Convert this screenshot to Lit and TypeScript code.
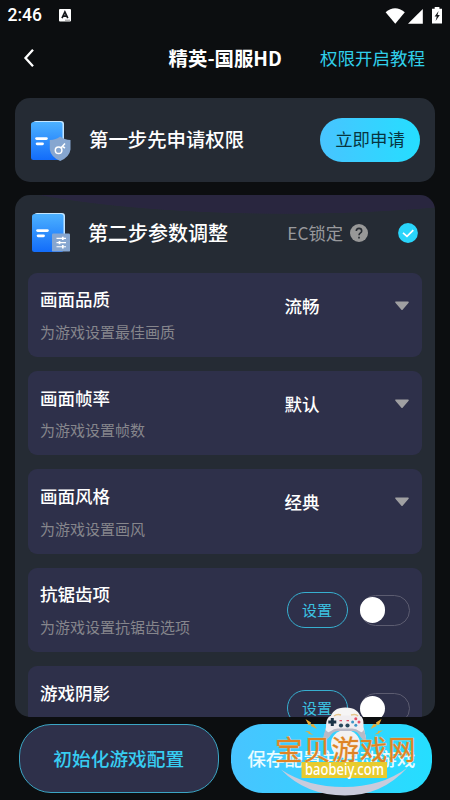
import { LitElement, html, css, svg } from "lit";
import { customElement, property } from "lit/decorators.js";

const FONT = css`"Noto Sans CJK SC", "Noto Sans", sans-serif`;

@customElement("setting-row")
class SettingRow extends LitElement {
  @property() name = "";
  @property() hint = "";
  @property() value = "";

  static styles = css`
    :host {
      display: flex;
      flex: none;
      box-sizing: border-box;
      height: 84.3px;
      border-radius: 9px;
      background: #2e304a;
      font-family: ${FONT};
    }
    .text {
      flex: none;
      width: 259px;
      box-sizing: border-box;
      padding: 13.6px 0 0 12.5px;
    }
    .name {
      font-size: 17.5px;
      line-height: 26px;
      font-weight: 500;
      color: #fff;
    }
    .hint {
      margin-top: 8.5px;
      font-size: 15px;
      line-height: 22px;
      color: #86868c;
      white-space: nowrap;
    }
    .pick {
      flex: 1;
      display: flex;
      justify-content: space-between;
      height: 26px;
      margin-top: 20px;
      padding-right: 12.5px;
      align-items: center;
      font-size: 17.5px;
      line-height: 26px;
      font-weight: 500;
      color: #fff;
    }
    .pick span {
      margin-left: -2px;
    }
    .ctl {
      flex: 1;
      display: flex;
      justify-content: space-between;
      align-items: center;
      padding-right: 12.5px;
    }
    .set {
      box-sizing: border-box;
      width: 61px;
      height: 36px;
      border: 1.5px solid #37afd0;
      border-radius: 18px;
      font-size: 15px;
      line-height: 34px;
      text-align: center;
      color: #3cc3e2;
    }
    .toggle {
      box-sizing: border-box;
      display: flex;
      align-items: center;
      width: 50px;
      height: 31px;
      border: 1.2px solid #5c5c70;
      border-radius: 16px;
    }
    .knob {
      width: 25.5px;
      height: 25.5px;
      margin-left: -1.2px;
      border-radius: 50%;
      background: #fff;
    }
  `;

  render() {
    return html`
      <div class="text">
        <div class="name">${this.name}</div>
        <div class="hint">${this.hint}</div>
      </div>
      ${this.value
        ? html`<div class="pick">
            <span>${this.value}</span>
            <svg width="16" height="10" viewBox="0 0 16 10">
              <path d="M2 1.2H14L8 8.2Z" fill="#a0a0a2" stroke="#a0a0a2" stroke-width="1.6" stroke-linejoin="round" />
            </svg>
          </div>`
        : html`<div class="ctl">
            <div class="set">设置</div>
            <div class="toggle"><div class="knob"></div></div>
          </div>`}
    `;
  }
}

const docBase = (id: string) => svg`
  <defs>
    <linearGradient id=${id} x1="0" y1="0" x2="0" y2="1">
      <stop offset="0" stop-color="#4cb1ff" /><stop offset="1" stop-color="#126cfa" />
    </linearGradient>
  </defs>
  <rect x="2" y="0" width="31" height="37" rx="3" fill="#c3e5ff" />
  <rect x="0" y="1" width="31.5" height="38" rx="2.5" fill=${`url(#${id})`} />
  <rect x="4.2" y="16.2" width="12.6" height="2.8" rx="1.4" fill="#fff" />
  <rect x="4.7" y="21.4" width="8.2" height="2.8" rx="1.4" fill="#fff" />`;

@customElement("app-root")
class AppRoot extends LitElement {
  static styles = css`
    :host {
      position: relative;
      display: flex;
      flex-direction: column;
      box-sizing: border-box;
      width: 450px;
      height: 800px;
      overflow: hidden;
      background: #0c0e10;
      color: #fff;
      font-family: ${FONT};
      white-space: nowrap;
    }
    svg {
      display: block;
      flex: none;
    }
    .status {
      display: flex;
      align-items: center;
      height: 31px;
      padding: 0 7px 0 7.5px;
      font: 500 17.5px/31px Roboto, sans-serif;
    }
    .ime {
      margin-left: 17px;
    }
    .radio {
      margin-left: auto;
    }
    .nav {
      display: grid;
      grid-template-columns: 1fr auto 1fr;
      align-items: center;
      height: 54px;
      padding: 0 25px 0 25.5px;
      font-size: 17.5px;
      line-height: 26px;
    }
    .nav svg {
      margin-left: -3.5px;
    }
    .nav b {
      font-size: 19.4px;
      font-weight: 700;
    }
    .guide {
      justify-self: end;
      color: #30cfea;
    }
    .card {
      flex: none;
      box-sizing: border-box;
      margin: 0 15px;
      border-radius: 15px;
      background: #252b34;
    }
    .first {
      display: flex;
      align-items: center;
      height: 84.5px;
      margin-top: 12.5px;
      padding: 0 15px 0 16px;
    }
    .first svg {
      margin-top: 2px;
    }
    .first h2 {
      margin: -1px 0 0 18px;
      font-size: 19.4px;
      line-height: 28px;
      font-weight: 500;
    }
    .apply {
      width: 100px;
      height: 43.5px;
      margin-left: auto;
      border-radius: 22px;
      background: linear-gradient(90deg, #48c4ff, #25deff);
      color: #08353f;
      font-size: 17.4px;
      line-height: 42px;
      text-align: center;
    }
    .second {
      height: 522px;
      margin-top: 13px;
      overflow: hidden;
      background: radial-gradient(ellipse 340px 60px at 270px -41px, #29263f 99%, transparent 100%) #252b34;
    }
    .head {
      display: flex;
      align-items: center;
      height: 77.7px;
      box-sizing: border-box;
      padding: 0 17.5px 1.5px 17px;
    }
    .head h2 {
      margin: 0 0 0 17px;
      font-size: 20px;
      line-height: 30px;
      font-weight: 500;
    }
    .lock {
      margin-left: auto;
      margin-right: 7px;
      font-size: 17.3px;
      line-height: 26px;
      color: #98999c;
    }
    .check {
      margin-left: 29.5px;
    }
    .rows {
      display: flex;
      flex-direction: column;
      gap: 14.1px;
      padding: 0 12.6px;
    }
    .foot {
      display: flex;
      gap: 12px;
      padding: 7px 18.5px 0;
    }
    .btn {
      box-sizing: border-box;
      width: 201px;
      height: 69px;
      border: 1.6px solid #3ba5c4;
      border-radius: 32px;
      background: #2e304a;
      color: #37cdf2;
      font-size: 18.7px;
      font-weight: 500;
      line-height: 65px;
      text-align: center;
    }
    .btn.go {
      border: 0;
      line-height: 67px;
      background: linear-gradient(90deg, #48c4ff, #25deff);
      color: #eafcff;
    }
    .mark {
      position: absolute;
      left: 270px;
      top: 700px;
    }
    .mark .cn {
      font: 400 27.6px "Noto Sans CJK SC", sans-serif;
      fill: #de8325;
      stroke: #f0c893;
      stroke-width: 0.7px;
      paint-order: stroke;
    }
    .mark .url {
      font: 500 16px "Noto Sans", sans-serif;
      fill: #fff;
    }
  `;

  render() {
    return html`
      <div class="status">
        <span>2:46</span>
        <svg class="ime" width="12" height="13" viewBox="0 0 12 13">
          <rect width="12" height="12.6" rx="1" fill="#fff" />
          <path d="M3 9.2L5.9 3L8.8 9.2M4 7.2H7.8" fill="none" stroke="#14171a" stroke-width="1.7" />
          <path d="M6 11.2H11" stroke="#777" stroke-width=".8" />
        </svg>
        <svg class="radio" width="58" height="18" viewBox="385 6 58 18">
          <path d="M385.6 11.2Q395 3.3 404.8 11.2L395.3 22.8Z" fill="#fff" />
          <path d="M408 22.7L422.8 8V22.7Z" fill="#fff" />
          <path d="M434.7 6H439.4V7.8H442V22.5H432V7.8H434.7Z" fill="#fff" />
          <path d="M438.6 10L434.6 15.5H436.8L435.6 20L439.8 14H437.5Z" fill="#15181b" />
        </svg>
      </div>
      <div class="nav">
        <svg width="14" height="22" viewBox="0 0 14 22">
          <path d="M11 2.8L3.5 11L11 19.2" fill="none" stroke="#fff" stroke-width="2.3" />
        </svg>
        <b>精英-国服HD</b>
        <span class="guide">权限开启教程</span>
      </div>

      <section class="card first">
        <svg width="40" height="40" viewBox="0 0 40 40">
          ${docBase("d1")}
          <path d="M29.2 15.5Q33.5 18.8 39.5 19V28.5Q38.5 36 29.2 40Q19.8 36 18.8 28.5V19Q25 18.8 29.2 15.5Z" fill="#86a6d0" />
          <circle cx="27.6" cy="29.3" r="3.3" fill="none" stroke="#fff" stroke-width="1.5" />
          <path d="M29.8 27L34 22.5M31.3 25.3L34 27" fill="none" stroke="#fff" stroke-width="1.5" />
        </svg>
        <h2>第一步先申请权限</h2>
        <div class="apply">立即申请</div>
      </section>

      <section class="card second">
        <div class="head">
          <svg width="39" height="40" viewBox="0 0 39 40">
            ${docBase("d2")}
            <rect x="20" y="20.6" width="18" height="18" rx="1.2" fill="#86a6d0" />
            <path d="M24.5 25.4H34M24.5 29.6H34M24.5 33.8H34" stroke="#fff" stroke-width="1.1" />
            <path d="M30.8 23.7V27M27.5 28V31.3M30.8 32.1V35.4" stroke="#fff" stroke-width="1.7" />
          </svg>
          <h2>第二步参数调整</h2>
          <span class="lock">EC锁定</span>
          <svg width="18" height="18" viewBox="0 0 18 18">
            <circle cx="9" cy="9" r="9" fill="#989898" />
            <path d="M6.3 7.1Q6.3 4.4 9 4.4T11.7 7Q11.7 8.2 10.2 9.2Q9 10 9 11.3M9 12.8V14.5" fill="none" stroke="#292d34" stroke-width="1.6" />
          </svg>
          <svg class="check" width="20" height="20" viewBox="0 0 20 20">
            <circle cx="10" cy="10" r="9.9" fill="#29d5fb" />
            <path d="M5 9.8L9 13.4L15.3 7.2" fill="none" stroke="#fff" stroke-width="1.7" />
          </svg>
        </div>
        <div class="rows">
          <setting-row name="画面品质" hint="为游戏设置最佳画质" value="流畅"></setting-row>
          <setting-row name="画面帧率" hint="为游戏设置帧数" value="默认"></setting-row>
          <setting-row name="画面风格" hint="为游戏设置画风" value="经典"></setting-row>
          <setting-row name="抗锯齿项" hint="为游戏设置抗锯齿选项"></setting-row>
          <setting-row name="游戏阴影"></setting-row>
        </div>
      </section>

      <div class="foot">
        <div class="btn">初始化游戏配置</div>
        <div class="btn go">保存配置并启动游戏</div>
      </div>

      <svg class="mark" width="150" height="100" viewBox="270 700 150 100">
        <path d="M281 769.5Q307 787 344 787Q381 787 407 768Q382 795.5 345 795.5Q306 795.5 281 769.5Z" fill="#c9cbdc" />
        <ellipse cx="345.5" cy="744" rx="14.5" ry="14" fill="#f3f1f2" />
        <path d="M330 719Q332 707.5 345.5 707.5T361 719Z" fill="#f6f5f5" />
        <path d="M326 727C326 718 329 715 334 715.5H357C362 715 364 718 363.5 727L366 738Q367 742 362 738Q358 730 352 730H339Q333 730 329 737Q323 742 324 737Z" fill="#f0edf0" />
        <path d="M325.5 729L323 738Q322.5 742 327 739C332 735 332 731 339 731H352C359 731 358 735 362.5 739Q367 742 366 738L364 729Q363 734 359 731Q356 728 351 728.5H339Q334 728 331 731Q327 734 325.5 729Z" fill="#b9b9c6" />
        <path d="M334 716Q337 713.7 341 715M351 715Q356 713.5 358 716" fill="none" stroke="#e5c58c" stroke-width="1.5" />
        <path d="M332.3 718V726M328.3 722H336.3" stroke="#1c3346" stroke-width="3" />
        <g fill="#27485c">
          <circle cx="341" cy="725.5" r="2.1" /><circle cx="347.5" cy="725.5" r="2.1" />
        </g>
        <path d="M339.5 720.7H342M346.5 720.7H349" stroke="#df5266" stroke-width="1.3" />
        <circle cx="355.8" cy="718.8" r="1.5" fill="#e65067" />
        <circle cx="352.6" cy="722" r="1.5" fill="#3b97c6" />
        <circle cx="359" cy="722" r="1.5" fill="#e65067" />
        <circle cx="355.8" cy="725.2" r="1.5" fill="#3b97c6" />
        <g fill="#e8ad35">
          <path d="M305.5 719L311 722.5L310.5 724.5L313.5 724L317 729L311 726L311 724.5L308.5 725Z" />
          <path d="M381.5 719L376 722.5L376.5 724.5L373.5 724L370.5 729L376.5 726L376 724.5L379 725Z" />
          <path d="M305 731L310 731.5L310 732.7L313.5 735L308.5 733.8L308.5 732.7Z" />
          <path d="M383 730.5L378 731L378 732.2L374.5 734.5L379.5 733.3L379.5 732.2Z" />
        </g>
        <text class="cn" x="275" y="759.5" textLength="140.5">宝贝游戏网</text>
        <rect x="301.5" y="762" width="85.5" height="16" fill="#e8cb2f" />
        <text class="url" x="305" y="775" textLength="79" lengthAdjust="spacingAndGlyphs">baobeiy.com</text>
      </svg>
    `;
  }
}
